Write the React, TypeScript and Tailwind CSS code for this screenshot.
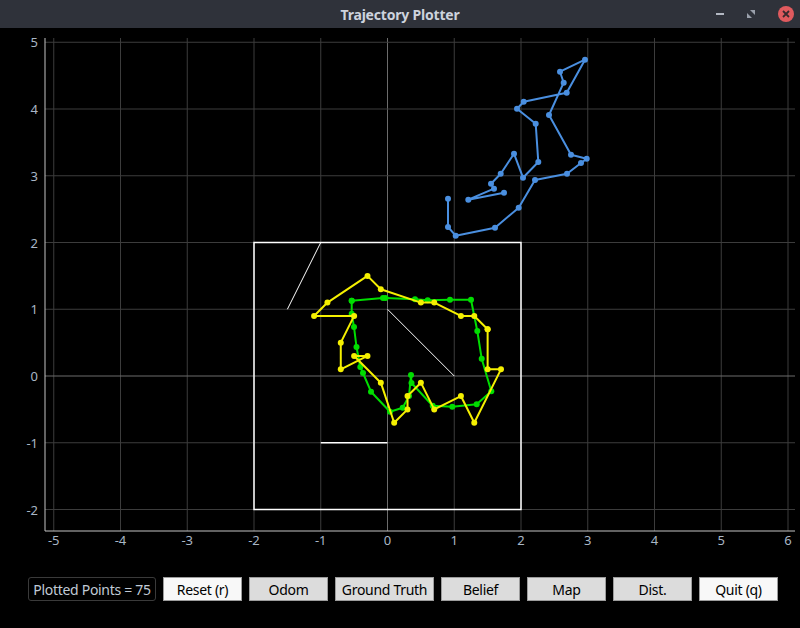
const sx = (x: number) => 387.5 + 66.75 * x;
const sy = (y: number) => 376 - 66.75 * y;

// blue path, screen coords
const odom: [number, number][] = [
  [448, 198.7], [448, 227], [455.7, 235.7], [495, 227.7], [518.7, 207.7], [535, 180],
  [567, 173.7], [581, 163], [586.7, 158.7], [571, 154.7], [549, 115], [563.7, 82.7],
  [560, 71.7], [585, 59.7], [566.7, 92.7], [523.7, 101.7], [517, 108.7], [535.7, 123.7],
  [538.3, 162], [523, 177.7], [514, 153.7], [500.7, 173.7], [491, 183.7], [494, 188.7],
  [468.3, 199.7], [504, 192.7],
];

// yellow path, data coords
const belief: [number, number][] = [
  [1.5, 0.7], [1.5, 0.1], [1.7, 0.1], [1.3, -0.7], [1.1, -0.3], [0.7, -0.5], [0.5, -0.1],
  [0.3, -0.3], [0.3, -0.5], [0.1, -0.7], [-0.1, -0.1], [-0.5, 0.3], [-0.3, 0.3], [-0.7, 0.1],
  [-0.7, 0.5], [-0.5, 0.9], [-1.1, 0.9], [-0.9, 1.1], [-0.3, 1.5], [-0.1, 1.3], [0.5, 1.1],
  [0.7, 1.1], [1.1, 0.9], [1.3, 0.9], [1.5, 0.7],
];

// green path, screen coords
const truth: [number, number][] = [
  [351.7, 300.7], [383, 298], [385.5, 298], [415, 299.3], [427.7, 300.3], [450, 299.7],
  [471, 299.7], [477.3, 331], [481.7, 358.7], [491.3, 391.3], [476.7, 404.3], [452.3, 406.7],
  [432.7, 405.7], [411.5, 383], [411, 375], [409, 396], [402.7, 407.7], [390, 411.7],
  [371, 391.7], [363, 373], [360.3, 367], [356.5, 347], [354, 327], [351.7, 313.7], [351.7, 300.7],
];

const xs = [-5, -4, -3, -2, -1, 0, 1, 2, 3, 4, 5, 6];
const ys = [-2, -1, 0, 1, 2, 3, 4, 5];

function Path({ pts, color }: { pts: [number, number][]; color: string }) {
  return (
    <g>
      <polyline points={pts.map(p => p.join(",")).join(" ")} fill="none" stroke={color} strokeWidth={2} strokeLinejoin="round" />
      {pts.map((p, i) => (
        <circle key={i} cx={p[0]} cy={p[1]} r={3} fill={color} />
      ))}
    </g>
  );
}

const buttons = [
  { label: "Reset (r)", w: "w-[79px]", light: true },
  { label: "Odom", w: "w-[79px]", light: false },
  { label: "Ground Truth", w: "w-[99px]", light: false },
  { label: "Belief", w: "w-[79px]", light: false },
  { label: "Map", w: "w-[79px]", light: false },
  { label: "Dist.", w: "w-[79px]", light: false },
  { label: "Quit (q)", w: "w-[79px]", light: true },
];

export default function App() {
  const font = { fontFamily: '"Noto Sans", "DejaVu Sans", sans-serif' };
  return (
    <div className="w-[800px] h-[628px] bg-black overflow-hidden flex flex-col" style={font}>
      <div className="h-[28px] bg-[#2f323a] flex items-center justify-center relative shrink-0">
        <span className="text-[14px] font-bold text-[#cdd3dd] tracking-[-0.2px]">Trajectory Plotter</span>
        <svg className="absolute right-0 top-0" width={100} height={28} viewBox="700 0 100 28">
          <rect x={716} y={13} width={8} height={2} fill="#b3b8c2" />
          <polygon points="750,10 755,10 755,15" fill="#9aa0ab" />
          <polygon points="747,13 747,18 752,18" fill="#9aa0ab" />
          <circle cx={786} cy={14} r={8} fill="#e05a5e" />
          <path d="M783 11 L789 17 M789 11 L783 17" stroke="#3a2a2e" strokeWidth={1.8} />
        </svg>
      </div>

      <svg width={800} height={549} viewBox="0 28 800 549" className="block shrink-0">
        {xs.map(x => (
          <line key={"vx" + x} x1={sx(x)} x2={sx(x)} y1={38} y2={531} stroke={x === 0 ? "#6c6c6c" : "#3c3c3c"} strokeWidth={1} />
        ))}
        {ys.map(y => (
          <line key={"hy" + y} x1={45} x2={795} y1={sy(y)} y2={sy(y)} stroke={y === 0 ? "#6c6c6c" : "#3c3c3c"} strokeWidth={1} />
        ))}
        <line x1={45} x2={45} y1={38} y2={531} stroke="#c4c4c4" strokeWidth={1} />
        <line x1={45} x2={795} y1={531} y2={531} stroke="#c4c4c4" strokeWidth={1} />
        {ys.map(y => (
          <text key={"ly" + y} x={38} y={sy(y) + 5} textAnchor="end" fontSize={13} fill="#a9b6c5">{y}</text>
        ))}
        {xs.map(x => (
          <text key={"lx" + x} x={sx(x)} y={545} textAnchor="middle" fontSize={13} fill="#a9b6c5">{x}</text>
        ))}

        <rect x={sx(-2)} y={sy(2)} width={sx(2) - sx(-2)} height={sy(-2) - sy(2)} fill="none" stroke="#ffffff" strokeWidth={1.5} />
        <line x1={sx(-1)} y1={sy(2)} x2={sx(-1.5)} y2={sy(1)} stroke="#ffffff" strokeWidth={1} />
        <line x1={sx(0)} y1={sy(1)} x2={sx(1)} y2={sy(0)} stroke="#ffffff" strokeWidth={1} />
        <line x1={sx(-1)} y1={sy(-1)} x2={sx(0)} y2={sy(-1)} stroke="#ffffff" strokeWidth={1.5} />

        <Path pts={odom} color="#4a8fe0" />
        <Path pts={truth} color="#00dd00" />
        <Path pts={belief.map(([x, y]) => [sx(x), sy(y)] as [number, number])} color="#f5f000" />
      </svg>

      <div className="flex items-start gap-[7px] pl-[28px]">
        <div className="h-[24px] w-[128px] border border-[#3a3a3a] rounded-[3px] flex items-center justify-center text-[14px] text-[#c0cad6] tracking-[-0.3px] whitespace-nowrap">
          Plotted Points = 75
        </div>
        {buttons.map(b => (
          <button
            key={b.label}
            className={`h-[24px] ${b.w} border border-[#9c9c9c] ${b.light ? "bg-[#f8f8f8]" : "bg-[#dcdcdc]"} text-[14px] text-black flex items-center justify-center tracking-[-0.3px] whitespace-nowrap`}
          >
            {b.label}
          </button>
        ))}
      </div>
    </div>
  );
}
